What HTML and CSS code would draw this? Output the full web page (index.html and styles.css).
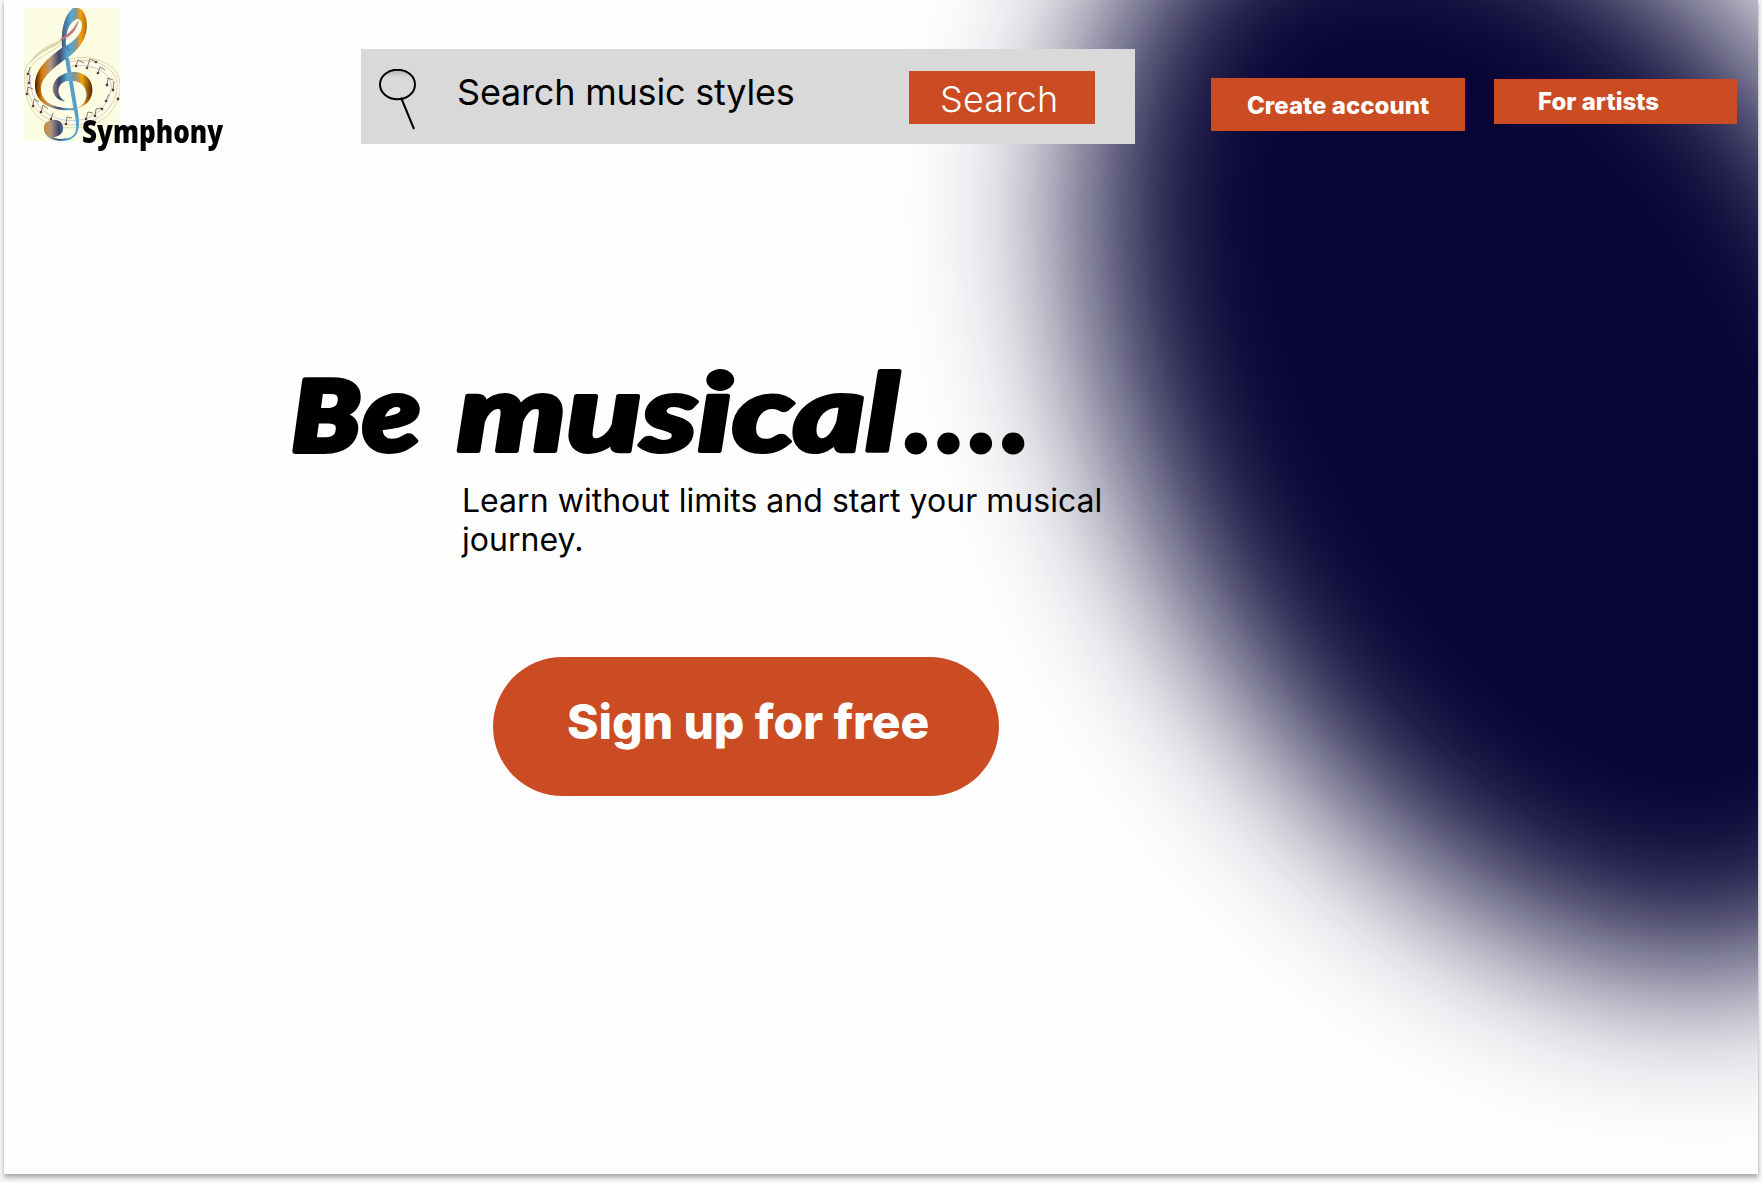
FILE: index.html
```html
<!DOCTYPE html>
<html lang="en">
<head>
<meta charset="utf-8">
<title>Symphony</title>
<link rel="stylesheet" href="styles.css">
</head>
<body>
<main class="page">
  <svg class="glow" viewBox="0 0 1754 1174" aria-hidden="true">
    <defs><filter id="soft" x="-50%" y="-50%" width="200%" height="200%" color-interpolation-filters="sRGB"><feGaussianBlur stdDeviation="82"/></filter></defs>
    <g filter="url(#soft)"><ellipse cx="1531" cy="411" rx="606" ry="389" fill="#080536" transform="rotate(60 1531 411)"/></g>
  </svg>
  <header class="bar">
    <div class="brand">
      <svg class="logo" viewBox="0 0 96 133" aria-hidden="true">
        <defs>
          <linearGradient id="metal" gradientUnits="userSpaceOnUse" x1="10" y1="0" x2="70" y2="0">
            <stop offset="0" stop-color="#2e0d00"/><stop offset=".13" stop-color="#d87b04"/><stop offset=".27" stop-color="#b59a80"/><stop offset=".42" stop-color="#3f4568"/><stop offset=".56" stop-color="#56a8d4"/><stop offset=".68" stop-color="#8a9490"/><stop offset=".8" stop-color="#f2a20c"/><stop offset="1" stop-color="#3a1200"/>
          </linearGradient>
          <linearGradient id="upper" gradientUnits="userSpaceOnUse" x1="36" y1="0" x2="63" y2="0">
            <stop offset="0" stop-color="#3f4568"/><stop offset=".4" stop-color="#56a8d4"/><stop offset=".6" stop-color="#8a9490"/><stop offset=".75" stop-color="#f2a20c"/><stop offset="1" stop-color="#b06a10"/>
          </linearGradient>
        </defs>
        <rect width="96" height="133" fill="#fdfde3"/>
        <g fill="none" stroke-width=".6">
          <path d="M3 62C2 84 7 104 28 113C44 119 62 119 78 107C92 95 98 77 89 65C80 54 64 50 46 54" stroke="#d9a0a8"/>
          <path d="M1 62C-1 88 5 109 28 117C45 122 66 121 82 109C97 96 100 74 91 62C80 51 62 47 46 51" stroke="#b9c47a"/>
          <path d="M6 62C5 83 11 101 30 109C44 115 60 114 74 104C86 93 91 79 84 69C76 59 62 56 47 58" stroke="#a0a8d8"/>
          <path d="M54 13C45 31 29 38 17 44C8 50 3 56 1 63M54 14C46 34 30 41 19 48C10 53 7 58 5 64" stroke="#b9c47a"/>
        </g>
        <path d="M54 12C47 25 39 31 27 36C16 41 9 48 6 56C13 48 20 43 29 39C41 33 49 26 54 12Z" fill="#c9b98a" opacity=".45"/>
        <!-- upper loop of the clef, drawn as an outer and an inner contour -->
        <path fill-rule="evenodd" d="M40 51C35 28 39 8 49 0L55 0C61 3 63 11 63 19C62 33 53 43 43 50ZM42 38C50 33 57 27 58 18C58 13 56 11 53 11C45 14 41 25 42 38Z" fill="url(#upper)"/>
        <path d="M55 12C50 22 44 26 36 31L38 32C47 28 53 22 55 12Z" fill="#c86f8c"/>
        <path d="M40 38C28 48 12 57 11 76C10 96 29 104 52 102L52 100C35 101 18 97 17 82C16 69 31 59 47 47Z" fill="url(#metal)"/>
        <path d="M41 50L49 98C53 116 55 127 44 130C38 132 32 131 29 129C38 128 41 122 38 116C35 110 20 111 20 120C20 131 33 135 45 132C57 128 56 114 53 98L45 50Z" fill="#56a0c8"/>
        <path d="M38 116C34 109 20 111 20 120C20 130 32 134 42 132L43 130C37 132 32 131 29 129C38 128 41 122 38 116Z" fill="url(#metal)"/>
        <path d="M53 100C75 96 73 64 50 64C32 64 23 80 33 90Q37 94 41 93C31 87 33 74 44 73C59 71 67 84 60 95Q57 99 53 100Z" fill="url(#metal)"/>
        <g fill="#5b3a2c">
          <circle cx="52" cy="58" r="1.300"/><circle cx="63" cy="60" r="1.300"/><circle cx="72" cy="54" r="1.300"/><circle cx="74" cy="65" r="1.300"/><circle cx="83" cy="77" r="1.400"/><circle cx="89" cy="82" r="1.400"/><circle cx="94" cy="91" r="1.400"/><circle cx="82" cy="93" r="1.300"/><circle cx="78" cy="101" r="1.300"/><circle cx="71" cy="108" r="1.300"/><circle cx="4" cy="66" r="1.300"/><circle cx="5" cy="75" r="1.300"/><circle cx="3" cy="86" r="1.300"/><circle cx="9" cy="98" r="1.300"/><circle cx="17" cy="104" r="1.300"/><circle cx="27" cy="111" r="1.300"/><circle cx="42" cy="116" r="1.300"/><circle cx="62" cy="111" r="1.300"/>
        </g>
        <path d="M52 58l2-6 6 3M63 60l3-9 5 2M74 65l2-6 5 3M83 77l1-7 5 2M89 82l1-9M4 66l2-7M5 75l1-8M3 86l1-7 5 2M9 98l1-7 5 3M17 104l2-7 5 4M27 111l2-6M42 116l1-7 5 1M62 111l2-7 5 1M71 108l1-7 5-1M82 93l3-7" fill="none" stroke="#6b5a4c" stroke-width=".8"/>
      </svg>
      <span class="name">Symphony</span>
    </div>
    <form class="search">
      <svg class="lens" viewBox="0 0 40 62" aria-hidden="true">
        <defs><linearGradient id="shade" x1="0" y1="0" x2="0" y2="1"><stop offset="0" stop-color="#b0b0b0"/><stop offset=".25" stop-color="#d9d9d9"/></linearGradient></defs>
        <ellipse cx="19.500" cy="15.500" rx="17.500" ry="14.800" fill="url(#shade)" stroke="#000" stroke-width="2"/>
        <path d="M23 28.500L36 60" stroke="#000" stroke-width="2"/>
      </svg>
      <span class="hint">Search music styles</span>
      <button class="go" type="button"><span class="go-text">Search</span></button>
    </form>
    <a class="link create"><span class="create-text">Create account</span></a>
    <a class="link artists"><span class="artists-text">For artists</span></a>
  </header>
  <section class="hero">
    <h1 class="title"><svg class="title-art" viewBox="0 0 760 120"><text class="title-text cap" x="2" y="98" textLength="68" lengthAdjust="spacingAndGlyphs">B</text><text class="title-text" x="72" y="98" textLength="59" lengthAdjust="spacingAndGlyphs">e</text><text class="title-text" x="167" y="98" textLength="442" lengthAdjust="spacingAndGlyphs">musical</text><text class="title-text dots" x="616" y="98" textLength="123" lengthAdjust="spacing">....</text></svg></h1>
    <p class="lead">Learn without limits and start your musical journey.</p>
    <a class="signup"><span class="signup-text">Sign up for free</span></a>
  </section>
</main>
</body>
</html>
```
FILE: styles.css
```css
* { box-sizing: border-box; }
body { margin: 0; height: 1182px; padding: 0 4px; overflow: hidden; background: #f8f6f5; font-family: Inter, sans-serif; color: #000; }
.page { position: relative; height: 1174px; background: #fefefe; box-shadow: 0 4px 4px rgba(0,0,0,.25), 0 0 4px rgba(0,0,0,.12); }
.glow { position: absolute; inset: 0; width: 1754px; height: 1174px; overflow: hidden; }
.bar { position: relative; display: flex; align-items: flex-start; height: 160px; padding-left: 20px; }
.brand { position: relative; width: 337px; height: 160px; flex: none; }
.logo { display: block; width: 96px; height: 133px; margin-top: 8px; }
.name { position: absolute; left: 58px; top: 112px; font: 800 31px/38px "Open Sans", sans-serif; transform: scaleX(.84); transform-origin: left; }
.search { display: flex; width: 774px; height: 95px; margin: 49px 76px 0 0; padding-left: 17px; background: #d9d9d9; flex: none; }
.lens { width: 40px; height: 62px; margin-top: 20px; flex: none; }
.hint { width: 491px; padding: 21px 0 0 39px; font-size: 36px; line-height: 44px; letter-spacing: -.2px; white-space: nowrap; flex: none; }
.go { width: 186px; height: 53px; margin-top: 22px; padding: 5px 0 0 31px; border: 0; background: #cb4b22; color: #fff; text-align: left; font: 300 36px/44px Inter, sans-serif; letter-spacing: .15px; }
.go-text, .create-text, .artists-text, .signup-text { display: block; white-space: nowrap; }
.go-text { margin-top: -2px; }
.link { display: block; flex: none; background: #cb4b22; color: #fff; font-size: 24px; line-height: 29px; font-weight: 800; letter-spacing: .02px; }
.create { width: 254px; height: 53px; margin: 78px 29px 0 0; padding: 13px 0 0 36px; }
.artists { width: 243px; height: 45px; margin-top: 79px; padding: 8px 0 0 44px; }
.hero { position: relative; padding: 193px 0 0 286px; }
.title { margin: 0; height: 120px; }
.title-art { display: block; width: 760px; height: 120px; overflow: visible; }
.title-text { font: italic 900 107px Lato, sans-serif; stroke: #000; stroke-width: 4px; stroke-linejoin: round; }
.cap { font-size: 97px; stroke-width: 6px; }
.dots { stroke-width: 5px; }
.lead { width: 660px; margin: 8px 0 0 172px; font-size: 32px; line-height: 39px; letter-spacing: .03px; }
.signup { display: block; width: 506px; height: 139px; margin: 98px 0 0 203px; padding: 36px 0 0 74px; border-radius: 70px; background: #cb4b22; color: #fff; font-size: 48px; line-height: 58px; font-weight: 800; letter-spacing: -.1px; }
```
